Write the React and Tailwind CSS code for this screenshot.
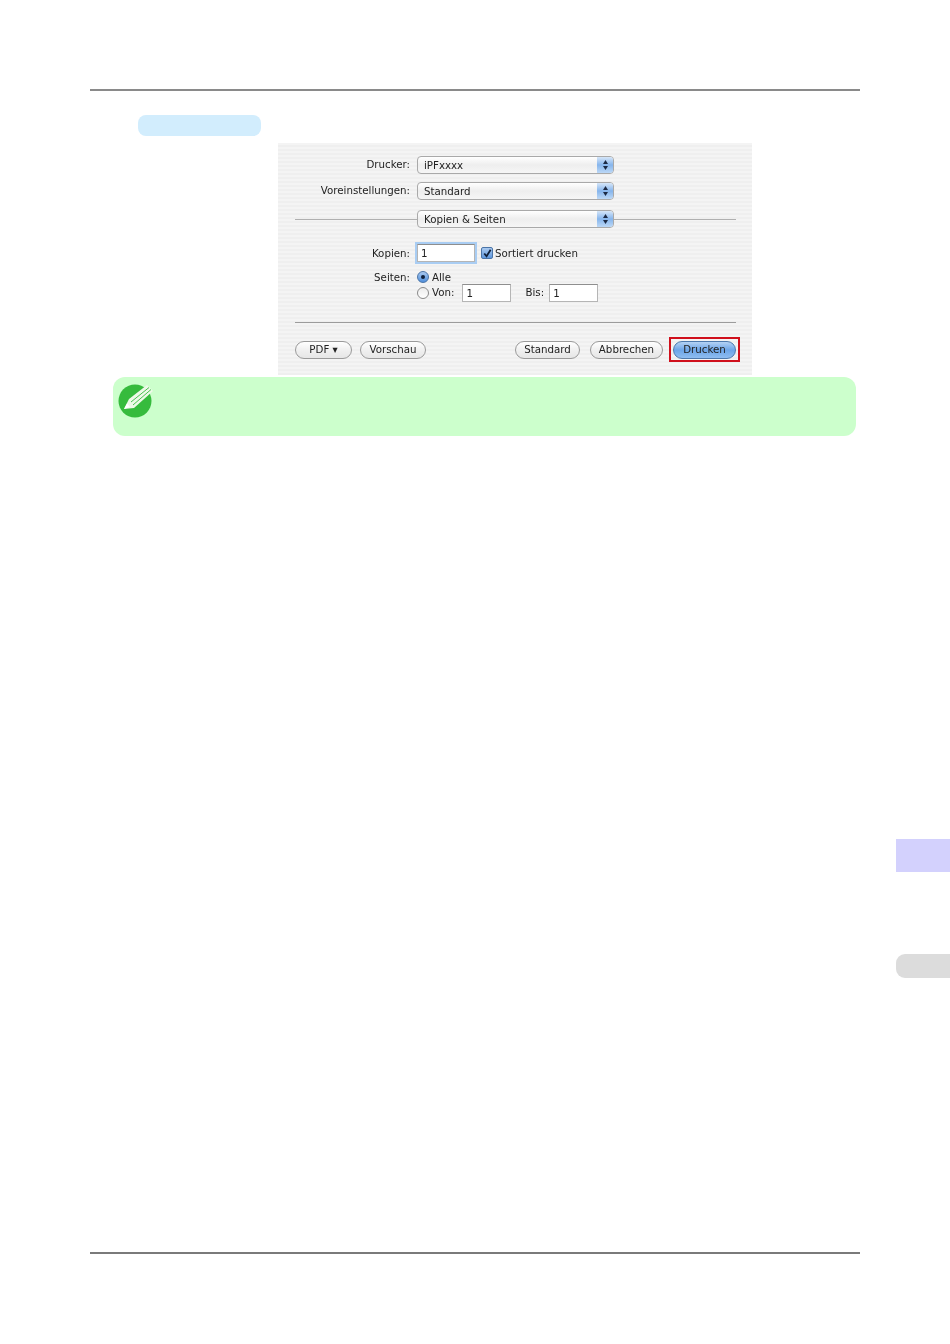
import { Fragment } from 'react';

const dialogFont = "font-['DejaVu_Sans',sans-serif] text-[10.25px] text-[#222222]";

function PopUp({ label }) {
  return (
    <div className="flex h-[18px] w-[197px] overflow-hidden rounded-[4px] border border-[#a9a9a9] bg-gradient-to-b from-[#ffffff] via-[#eeeeee] to-[#f6f6f6]">
      <div className="flex-1 pl-[6px] leading-[17px]">{label}</div>
      <div className="flex w-[16px] flex-col items-center justify-center gap-[2px] bg-gradient-to-b from-[#d6e6f8] via-[#86b5ec] to-[#bcd8f6]">
        <svg width="5" height="4" viewBox="0 0 5 4"><path d="M2.5 0 L5 4 L0 4 Z" fill="#1c2a44" /></svg>
        <svg width="5" height="4" viewBox="0 0 5 4"><path d="M2.5 4 L5 0 L0 0 Z" fill="#1c2a44" /></svg>
      </div>
    </div>
  );
}

function Field({ value, className }) {
  return (
    <div className={`h-[18px] border border-[#b5b5b5] border-t-[#8e8e8e] bg-white pl-[3px] leading-[17px] ${className}`}>
      {value}
    </div>
  );
}

function Radio({ checked }) {
  return checked ? (
    <span className="flex h-[12px] w-[12px] items-center justify-center rounded-full border border-[#4a74a8] bg-gradient-to-b from-[#a9c9ef] to-[#4f8fdc]">
      <span className="h-[4px] w-[4px] rounded-full bg-[#10203a]" />
    </span>
  ) : (
    <span className="h-[12px] w-[12px] rounded-full border border-[#8a8a8a] bg-gradient-to-b from-[#ececec] to-white" />
  );
}

function Pill({ children, className = '' }) {
  return (
    <div className={`flex h-[18px] items-center justify-center rounded-full border bg-gradient-to-b ${className}`}>
      {children}
    </div>
  );
}

const plainPill = 'border-[#9a9a9a] from-[#ffffff] via-[#f0f0f0] to-[#e6e6e6]';

function Dialog() {
  const selects = [
    ['Drucker:', 'iPFxxxx'],
    ['Voreinstellungen:', 'Standard'],
  ];
  return (
    <div className={`ml-[278px] h-[232px] w-[474px] bg-[#f0f0f0] bg-[repeating-linear-gradient(0deg,#efefef_0px,#efefef_2px,#f4f4f4_2px,#f4f4f4_4px)] pt-[13px] blur-[0.3px] ${dialogFont}`}>
      <div className="grid grid-cols-[132px_auto] items-center justify-start gap-x-[7px] gap-y-[8px]">
        {selects.map(([label, value]) => (
          <Fragment key={label}>
            <div className="text-right">{label}</div>
            <PopUp label={value} />
          </Fragment>
        ))}
      </div>

      <div className="mt-[10px] flex items-center pl-[17px] pr-[16px]">
        <div className="h-px flex-1 bg-[#b0b0b0]" />
        <PopUp label="Kopien & Seiten" />
        <div className="h-px flex-1 bg-[#b0b0b0]" />
      </div>

      <div className="mt-[16px] flex h-[18px] items-center">
        <div className="w-[132px] pt-[2px] text-right">Kopien:</div>
        <Field value="1" className="ml-[7px] w-[58px] shadow-[0_0_0_2px_#a9cdf3]" />
        <span className="ml-[6px] flex h-[12px] w-[12px] items-center justify-center rounded-[2px] border border-[#4a74a8] bg-gradient-to-b from-[#a9c9ef] to-[#5f98de]">
          <svg width="11" height="11" viewBox="0 0 11 11"><path d="M2.5 5.5 L5 8.5 L9.5 1.5" fill="none" stroke="#10203a" strokeWidth="2" /></svg>
        </span>
        <span className="ml-[2px] pt-[2px]">Sortiert drucken</span>
      </div>

      <div className="mt-[8px] flex h-[14px] items-center">
        <div className="w-[132px] pt-[1px] text-right">Seiten:</div>
        <span className="ml-[7px]"><Radio checked /></span>
        <span className="ml-[3px] pt-[1px]">Alle</span>
      </div>

      <div className="flex h-[18px] items-center pl-[139px]">
        <Radio />
        <span className="ml-[3px]">Von:</span>
        <Field value="1" className="ml-[8px] w-[49px]" />
        <span className="ml-[14px]">Bis:</span>
        <Field value="1" className="ml-[5px] w-[49px]" />
      </div>

      <div className="ml-[17px] mt-[20px] h-px w-[441px] bg-[#9c9c9c]" />

      <div className="mt-[14px] flex h-[25px] items-center pl-[17px]">
        <Pill className={`w-[57px] ${plainPill}`}>PDF ▾</Pill>
        <Pill className={`ml-[8px] w-[66px] ${plainPill}`}>Vorschau</Pill>
        <Pill className={`ml-[89px] w-[65px] ${plainPill}`}>Standard</Pill>
        <Pill className={`ml-[10px] w-[73px] ${plainPill}`}>Abbrechen</Pill>
        <div className="ml-[6px] flex h-[25px] w-[71px] items-center justify-center border-2 border-[#d0101c]">
          <Pill className="w-[63px] border-[#4d79ad] from-[#b4d2f4] via-[#6ca5e8] to-[#8fbdf0]">Drucken</Pill>
        </div>
      </div>
    </div>
  );
}

function NoteIcon() {
  return (
    <svg width="37" height="36" viewBox="0 0 37 36">
      <circle cx="18" cy="18" r="16.5" fill="#36bb3d" />
      <path d="M7 26 L12 16 L30 2 L36 8 L17 25 Z" fill="#eef9e8" />
      <path d="M14 19 L32 4.5 M16 22 L34 6.5" stroke="#36bb3d" strokeWidth="0.9" />
      <path d="M7 26 L10 20.5 L13 24 Z" fill="#ffffff" />
    </svg>
  );
}

export default function App() {
  return (
    <div className="h-[1344px] w-[950px] overflow-hidden bg-white">
      <div className="h-[89px]" />
      <div className="ml-[90px] h-[2px] w-[770px] bg-[#8a8a8a]" />

      <div className="ml-[138px] mt-[24px] h-[21px] w-[123px] rounded-[8px] bg-[#d2edfd]" />
      <div className="h-[7px]" />
      <Dialog />

      <div className="ml-[113px] mt-[2px] h-[59px] w-[743px] rounded-[12px] bg-[#ccffcc] pl-[4px] pt-[6px]">
        <NoteIcon />
      </div>

      <div className="ml-[896px] mt-[403px] h-[33px] w-[54px] bg-[#d3d1fd]" />
      <div className="ml-[896px] mt-[82px] h-[24px] w-[54px] rounded-l-[9px] bg-[#dcdcdc]" />

      <div className="ml-[90px] mt-[274px] h-[2px] w-[770px] bg-[#7a7a7a]" />
    </div>
  );
}
